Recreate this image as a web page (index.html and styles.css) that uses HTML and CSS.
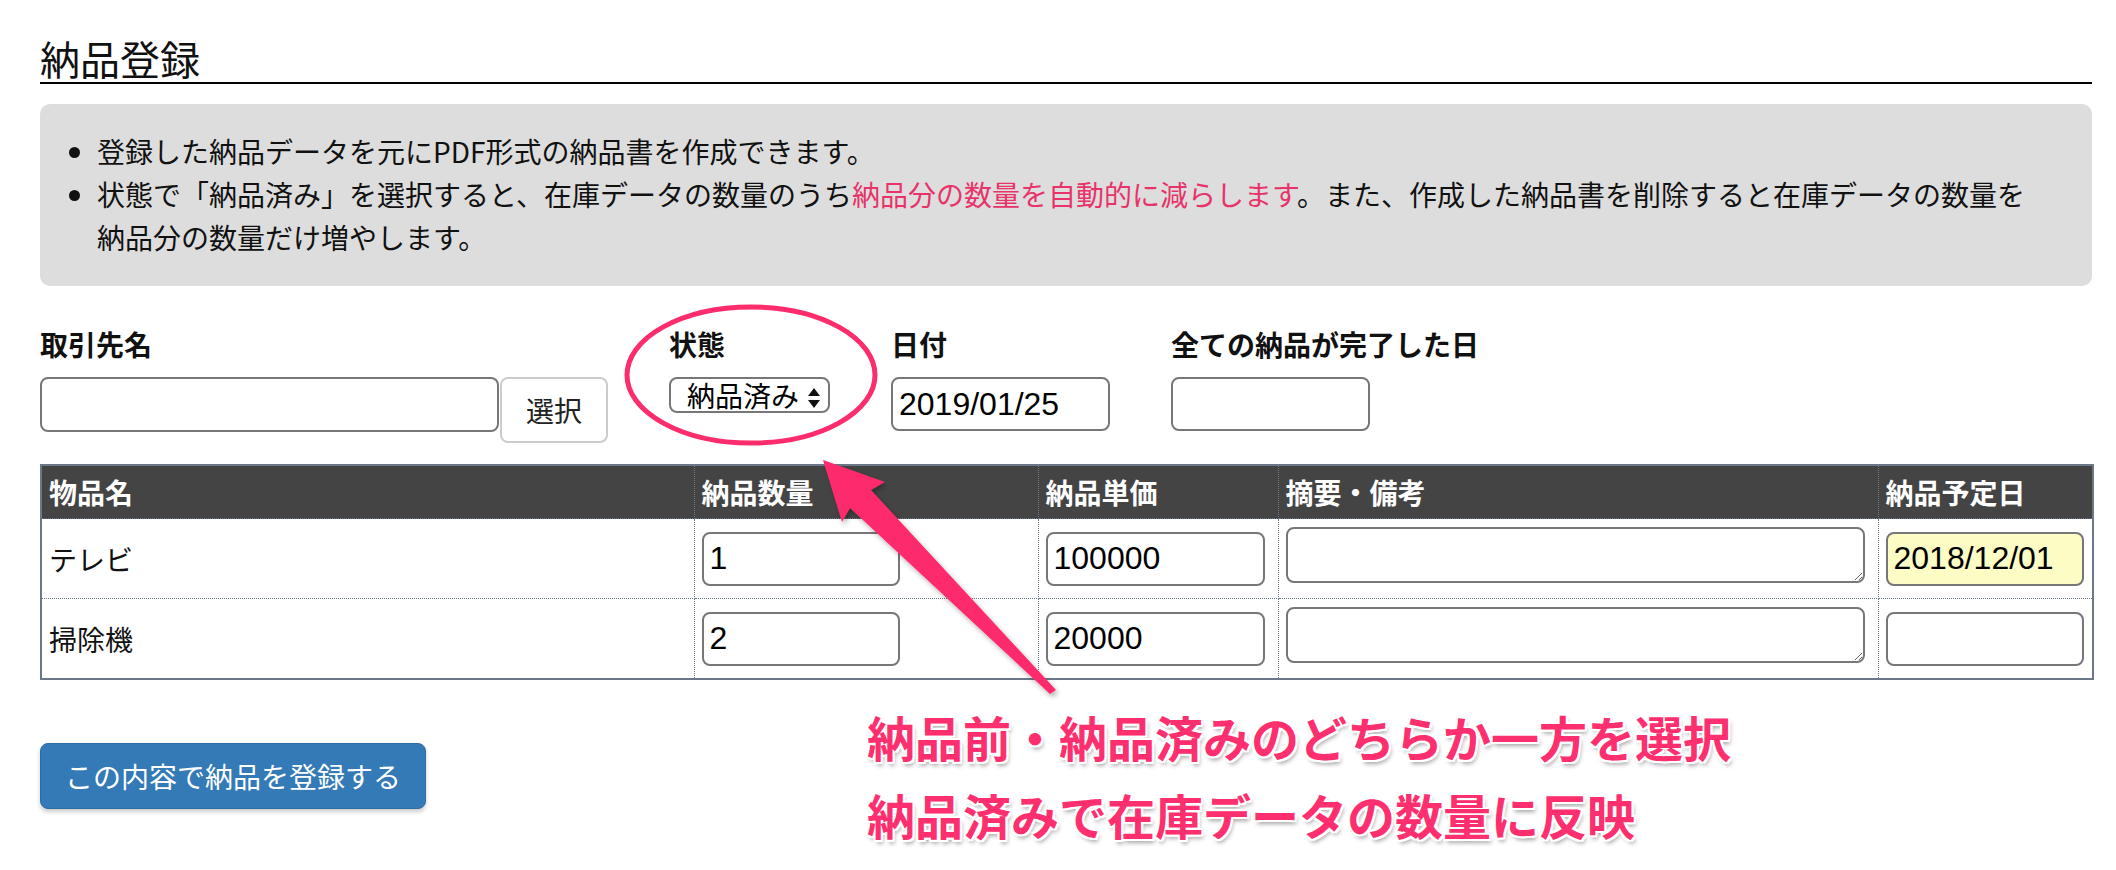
FILE: index.html
```
<!DOCTYPE html>
<html lang="ja">
<head>
    <meta charset="UTF-8">
    <title>納品登録</title>
    <link rel="stylesheet" href="styles.css">
</head>
<body>
    <div class="page">
        <h1 class="page-title">納品登録</h1>

        <div class="notice">
            <ul>
                <li>登録した納品データを元にPDF形式の納品書を作成できます。</li>
                <li>状態で「納品済み」を選択すると、在庫データの数量のうち<span class="em">納品分の数量を自動的に減らします</span>。また、作成した納品書を削除すると在庫データの数量を納品分の数量だけ増やします。</li>
            </ul>
        </div>

        <div class="form-row">
            <div class="field">
                <label for="client">取引先名</label>
                <div class="field-line">
                    <input type="text" id="client" class="input client">
                    <button type="button" class="btn-select">選択</button>
                </div>
            </div>
            <div class="field">
                <label for="status">状態</label>
                <div class="select-wrap">
                    <select id="status" class="status">
                        <option>納品前</option>
                        <option selected>納品済み</option>
                    </select>
                    <svg class="select-arrows" width="14" height="22" viewBox="0 0 14 22">
                        <path d="M7 1 L13 9 L1 9 Z" fill="#111"/>
                        <path d="M1 13 L13 13 L7 21 Z" fill="#111"/>
                    </svg>
                </div>
            </div>
            <div class="field">
                <label for="date">日付</label>
                <input type="text" id="date" class="input date" value="2019/01/25">
            </div>
            <div class="field">
                <label for="doneDate">全ての納品が完了した日</label>
                <input type="text" id="doneDate" class="input done-date">
            </div>
        </div>

        <table class="items">
            <colgroup>
                <col style="width: 653px">
                <col style="width: 344px">
                <col style="width: 240px">
                <col style="width: 600px">
                <col style="width: 215px">
            </colgroup>
            <thead>
                <tr>
                    <th>物品名</th>
                    <th>納品数量</th>
                    <th>納品単価</th>
                    <th>摘要・備考</th>
                    <th>納品予定日</th>
                </tr>
            </thead>
            <tbody>
                <tr>
                    <td>テレビ</td>
                    <td><input type="text" class="input qty" value="1"></td>
                    <td><input type="text" class="input price" value="100000"></td>
                    <td><textarea class="note"></textarea></td>
                    <td><input type="text" class="input due filled" value="2018/12/01"></td>
                </tr>
                <tr>
                    <td>掃除機</td>
                    <td><input type="text" class="input qty" value="2"></td>
                    <td><input type="text" class="input price" value="20000"></td>
                    <td><textarea class="note"></textarea></td>
                    <td><input type="text" class="input due"></td>
                </tr>
            </tbody>
        </table>

        <button type="button" class="btn-submit">この内容で納品を登録する</button>
    </div>

    <svg class="overlay" width="2116" height="870" viewBox="0 0 2116 870">
        <defs>
            <filter id="soft" x="-20%" y="-20%" width="140%" height="140%">
                <feDropShadow dx="2" dy="3" stdDeviation="2.5" flood-color="#000" flood-opacity="0.3"/>
            </filter>
        </defs>
        <ellipse cx="751" cy="375" rx="124" ry="68" fill="none" stroke="#fd2d6d" stroke-width="5"/>
        <polygon points="823,460 885,482 871,490 1056,690 1050,694 850,508 842,522" fill="#fd2b6d" filter="url(#soft)"/>
    </svg>

    <div class="callout">
        <div>納品前・納品済みのどちらか一方を選択</div>
        <div>納品済みで在庫データの数量に反映</div>
    </div>
</body>
</html>
```

FILE: styles.css
```
html {
    min-height: 870px;
}
body {
    margin: 0;
    min-height: 870px;
    position: relative;
    font-family: "Noto Sans CJK JP", sans-serif;
    color: #111;
    background: #fff;
}
.page {
    width: 2052px;
    margin-left: 40px;
    padding-top: 36px;
}
.page-title {
    margin: 0;
    font-size: 40px;
    line-height: 44px;
    font-weight: 400;
    padding-bottom: 2px;
    border-bottom: 2px solid #000;
}
.notice {
    margin-top: 20px;
    background-color: #dddddd;
    border-radius: 10px;
    padding: 26px 50px 27px 0;
}
.notice ul {
    margin: 0;
    padding-left: 57px;
    font-size: 28px;
    line-height: 43px;
}
.notice .em {
    color: #e8336a;
}
.form-row {
    display: flex;
    align-items: flex-start;
    gap: 61px;
    margin-top: 38px;
}
.field label {
    display: block;
    font-size: 28px;
    line-height: 40px;
    font-weight: 700;
    margin-bottom: 13px;
    white-space: nowrap;
}
.field-line {
    display: flex;
    align-items: flex-start;
    gap: 1px;
}
.input {
    box-sizing: border-box;
    height: 54px;
    border: 2px solid #777;
    border-radius: 8px;
    padding: 0 6px;
    font-family: "Liberation Sans", "Noto Sans CJK JP", sans-serif;
    font-size: 32px;
    color: #000;
    background-color: #fff;
    outline: none;
}
.client {
    width: 459px;
    height: 55px;
}
.btn-select {
    box-sizing: border-box;
    width: 108px;
    height: 66px;
    border: 2px solid #ccc;
    border-radius: 8px;
    background-color: #fff;
    font-family: "Noto Sans CJK JP", sans-serif;
    font-size: 28px;
    color: #222;
    padding: 0;
}
.select-wrap {
    position: relative;
    width: 161px;
}
.status {
    appearance: none;
    -webkit-appearance: none;
    box-sizing: border-box;
    width: 161px;
    height: 36px;
    border: 2px solid #777;
    border-radius: 8px;
    background-color: #fff;
    padding: 0 30px 0 16px;
    font-family: "Noto Sans CJK JP", sans-serif;
    font-size: 28px;
    line-height: 32px;
    color: #000;
}
.select-arrows {
    position: absolute;
    left: 138px;
    top: 10px;
}
.date {
    width: 219px;
}
.done-date {
    width: 199px;
}
.items {
    margin-top: 21px;
    width: 2052px;
    table-layout: fixed;
    border-collapse: collapse;
    border: 2px solid #6b7889;
}
.items th,
.items td {
    border: 1px dotted #6b7889;
    padding: 0 7px;
    text-align: left;
    vertical-align: middle;
    font-size: 28px;
    line-height: 40px;
}
.items th {
    height: 52px;
    background-color: #444;
    color: #fff;
    font-weight: 700;
}
.items td {
    height: 79px;
}
.qty {
    width: 198px;
}
.price {
    width: 219px;
}
.due {
    width: 198px;
}
.due.filled {
    background-color: #fcfcc4;
}
.note {
    box-sizing: border-box;
    width: 579px;
    height: 56px;
    margin: 0 0 8px 0;
    vertical-align: middle;
    border: 2px solid #777;
    border-radius: 8px;
    font-size: 28px;
    outline: none;
}
.btn-submit {
    display: block;
    margin-top: 63px;
    box-sizing: border-box;
    width: 386px;
    height: 66px;
    padding: 0;
    background-color: #337ab7;
    border: 1px solid #2e6da4;
    border-radius: 8px;
    box-shadow: 0 3px 4px rgba(0, 0, 0, 0.2);
    color: #fff;
    font-family: "Noto Sans CJK JP", sans-serif;
    font-size: 28px;
}
.overlay {
    position: absolute;
    left: 0;
    top: 0;
    pointer-events: none;
}
.callout {
    position: absolute;
    left: 867px;
    top: 697px;
    font-size: 48px;
    line-height: 78px;
    font-weight: 700;
    color: #fe2f6e;
    white-space: nowrap;
    text-shadow: 2px 0 0 #fff, -2px 0 0 #fff, 0 2px 0 #fff, 0 -2px 0 #fff,
        2px 2px 0 #fff, -2px -2px 0 #fff, 2px -2px 0 #fff, -2px 2px 0 #fff,
        2px 4px 4px rgba(0, 0, 0, 0.35);
}
```
